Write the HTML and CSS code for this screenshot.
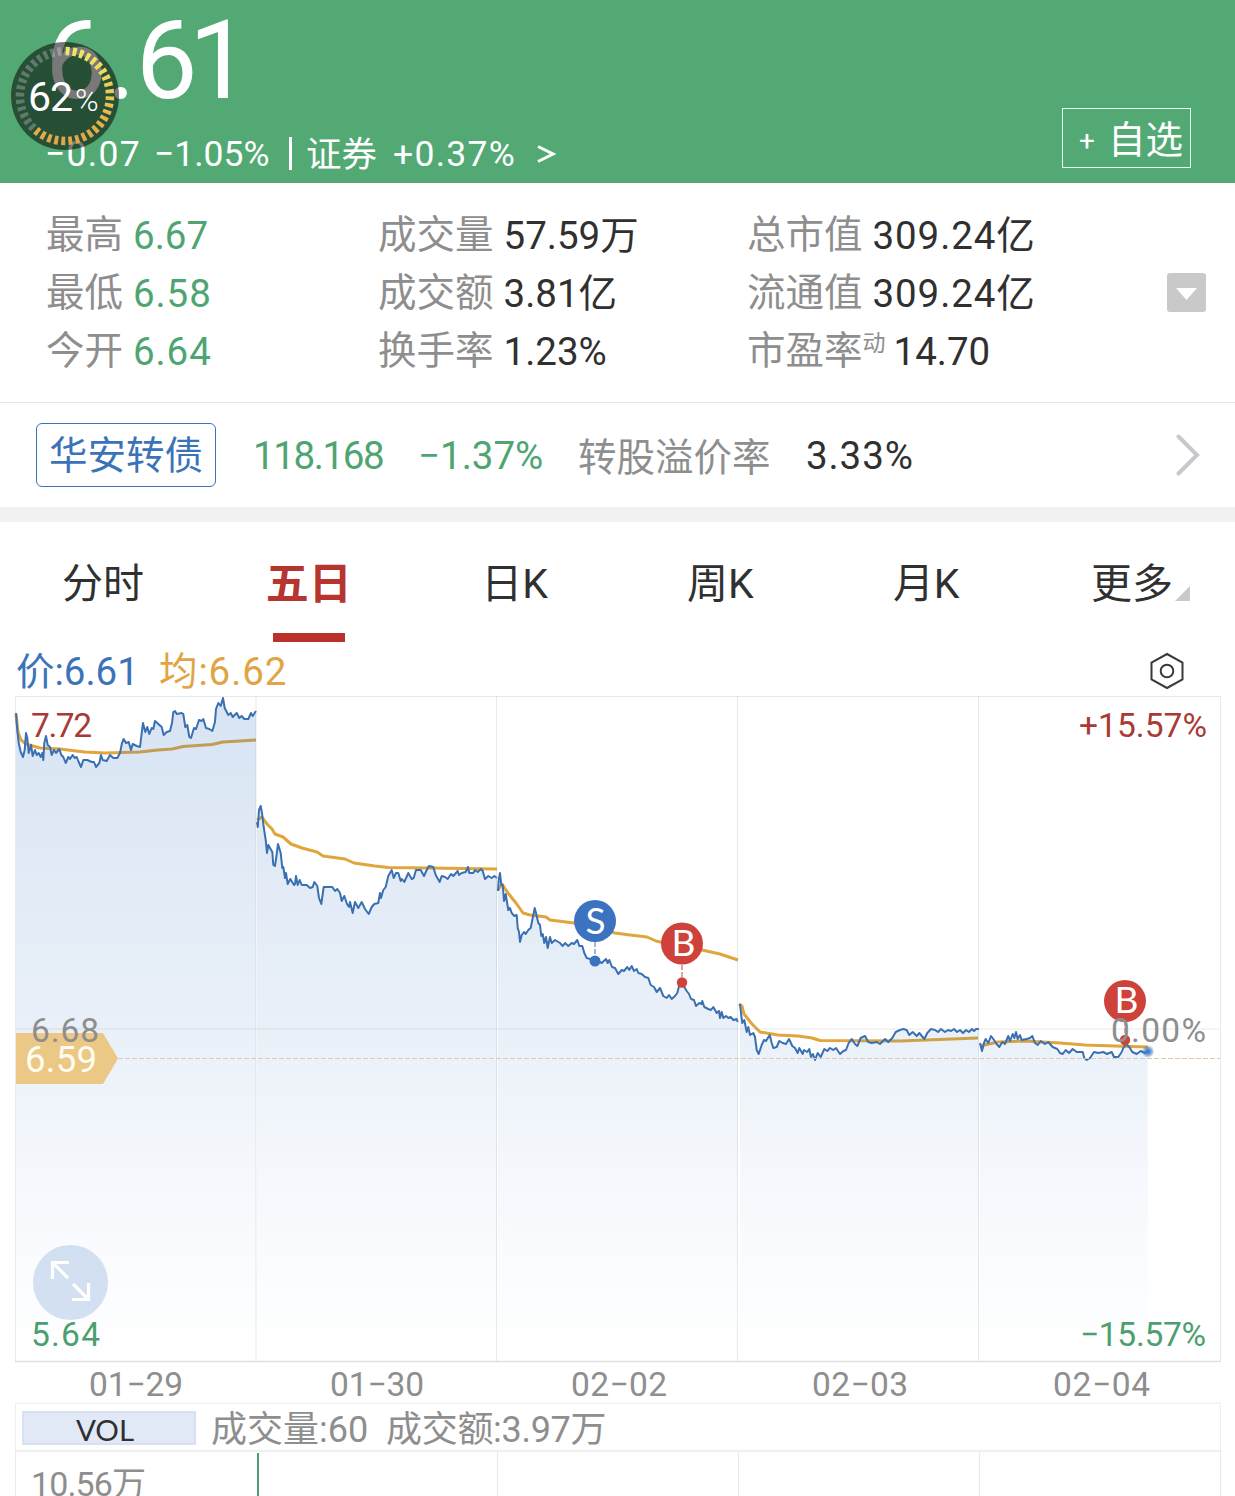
FILE: index.html
```html
<!DOCTYPE html>
<html lang="zh-CN">
  <head>
    <meta charset="UTF-8" />
    <meta name="viewport" content="width=device-width, initial-scale=1.0" />
    <title>华安证券 6.61</title>
    <link rel="stylesheet" href="styles.css">
  </head>
  <body>
    <header class="quote">
      <div class="quote-main">
        <div class="price">6.6<span class="one">1</span></div>
        <div class="change">
          <span class="wide">−0.07</span>
          <span>−1.05%</span>
          <span class="bar"></span>
          <span class="sector">证券</span>
          <span class="wide">+0.37%</span>
          <svg class="more" viewBox="0 0 20 20"><path d="M2 2.5 17 10 2 17.5" /></svg>
        </div>
      </div>
      <button class="btn-add"><span class="plus">+</span>自选</button>

      <!-- Floating battery dial -->
      <svg class="dial" viewBox="0 0 108 108">
        <defs>
          <linearGradient id="gold" x1="0" y1="0" x2="0" y2="1">
            <stop offset="0" stop-color="#f3e765" />
            <stop offset="1" stop-color="#e0a547" />
          </linearGradient>
        </defs>
        <circle class="dial-bg" cx="54" cy="54" r="54" />
        <path class="dial-off" d="M24.6 88.1A45 45 0 0 1 54.8 9" pathLength="156" />
        <path class="dial-on" stroke="url(#gold)" d="M54.8 9A45 45 0 1 1 24.6 88.1" pathLength="246" />
        <text class="dial-num" x="17" y="69" textLength="45">62</text>
        <text class="dial-pct" x="64" y="69" textLength="25">%</text>
      </svg>
    </header>

    <section class="stats">
      <dl class="stats-grid">
        <div><dt>最高</dt><dd class="green">6.67</dd></div>
        <div><dt>成交量</dt><dd>57.59万</dd></div>
        <div><dt>总市值</dt><dd class="wide">309.24亿</dd></div>
        <div><dt>最低</dt><dd class="green wide">6.58</dd></div>
        <div><dt>成交额</dt><dd>3.81亿</dd></div>
        <div><dt>流通值</dt><dd class="wide">309.24亿</dd></div>
        <div><dt>今开</dt><dd class="green wide">6.64</dd></div>
        <div><dt>换手率</dt><dd>1.23%</dd></div>
        <div><dt>市盈率<sup>动</sup></dt><dd class="pe">14.70</dd></div>
      </dl>
      <button class="btn-expand" aria-label="展开">
        <svg viewBox="0 0 39 39"><path d="M9 15h21L19.5 27z" /></svg>
      </button>
    </section>

    <section class="bond">
      <span class="bond-tag">华安转债</span>
      <span class="bond-price green">118.168</span>
      <span class="bond-change green">−1.37%</span>
      <span class="bond-label">转股溢价率</span>
      <span class="bond-rate wide">3.33%</span>
      <svg class="chevron" viewBox="0 0 24 42"><path d="M2.5 2.5 21 21 2.5 39.5" /></svg>
    </section>

    <nav class="tabs">
      <a>分时</a>
      <a class="active">五日</a>
      <a>日K</a>
      <a>周K</a>
      <a>月K</a>
      <a>更多<svg class="corner" viewBox="0 0 15 15"><path d="M15 0v15H0z" /></svg></a>
    </nav>

    <div class="legend">
      <span class="blue">价:6.61</span>
      <span class="gold wide">均:6.62</span>
      <svg class="gear" viewBox="0 0 36 38">
        <path d="M18 2 33.5 10.5v17L18 36 2.5 27.500v-17z" />
        <circle cx="18" cy="19" r="6.300" />
      </svg>
    </div>

    <svg class="chart" viewBox="0 696 1235 708">
      <defs>
        <linearGradient id="fade" gradientUnits="userSpaceOnUse" x1="0" y1="696" x2="0" y2="1361">
          <stop offset="0" stop-color="#3b78c4" stop-opacity=".2" />
          <stop offset=".5" stop-color="#3b78c4" stop-opacity=".11" />
          <stop offset="1" stop-color="#6fa0e0" stop-opacity="0" />
        </linearGradient>
        <radialGradient id="pulse">
          <stop offset="0" stop-color="#3b75c4" />
          <stop offset=".4" stop-color="#3b75c4" stop-opacity=".8" />
          <stop offset="1" stop-color="#3b75c4" stop-opacity=".15" />
        </radialGradient>
      </defs>

      <!-- Average price -->
      <g class="avg">
        <path d="M16 714 18 732 21 740 26 744 40 748 60 749 76 751 85 752 105 753 140 752 158 750 172 749 183 746.500 212 744.500 223 742 240 741 256 740" />
        <path d="M257 820 262 817 267 824 272 829 275 834 283 837 291 844 302 848 317 852 323 856 345 859 354 863 375 866 388 867.500 430 868 497 869" />
        <path d="M498 890 502 884 508 893 516 903 523 913 530 915 546 917 550 920 574 923 595 927 615 933 630 935 647 937 656 941 682 947 702 950 720 954 738 960" />
        <path d="M739 1004 742 1006 744 1014 752 1024 760 1032 778 1035 798 1036 812 1038 820 1040.500 900 1041 978 1038" />
        <path d="M980 1046 998 1042 1025 1041 1060 1043 1085 1045 1115 1046 1148 1047" />
      </g>

      <!-- Shading under the price, filled in by the script below -->
      <g class="area"></g>

      <!-- Price, one path per day -->
      <g class="price-line">
        <path d="M16 713 17.300 730 18.700 743 20.700 752 23 757 24.700 750 26 733 27.300 738 28.700 753 31 745 32.700 756 35 750 36.700 755 38.700 753 40.700 757 42.300 753 43.300 760 44.300 743 46 736 47.700 745 50 747 51.700 755 54 750 56 753 59.300 749 61.300 755 63.300 757 65.700 763 68.300 757 70 759 72.700 755 74.700 758 76.700 757 78.700 762 81 767 83.300 760 87.300 760 91.700 762 94 762 96 767 99.300 763 101 755 102.700 760 106.700 761 110 755 113.300 758 117.300 758 120 753 122 743 123.700 739 126 743 128.700 742 131 750 132.700 744 136.700 746 140 747 141.700 733 143 723 145.300 732 147.300 727 149.300 734 151.700 728 153.300 729 155 721 158.300 724 161.700 727 163.700 735 166.700 732 170 731 172 723 173.300 712 175 711 176.700 714 181.700 713 183.300 714 185.300 727 187.300 725 189.300 737 191 738 194 728 196 729 199 720 201.700 721 203.300 719 206 728 209.300 729 212.300 731 215 722 216 709 218.300 703 220.700 706 223 698 224.700 708 228.300 715 230.700 713 232.700 717 236.700 713 239.300 718 241.700 716 244.300 719 248.300 719 251 713 252.700 716 256 711" />
        <path d="M257 822 257.800 827 259 810 260.700 806 262 813 263.700 827 265.700 840 267 853 268.300 845 272.300 852 273.300 865 275 866 276.300 857 278 844 280.700 853 282.300 868 283.300 867 285 878 286 873 287.700 884 290.300 879 294 885 295 884 296 876 297.700 885 299.700 880 301.700 885 306.700 885 310 888 312.700 887 314.300 882 317.300 886 319 898 321.300 904 323.700 887 326.700 887 332.300 887 335 891 337.300 889 340 893 341.700 901 344.300 896 347 904 349 907 350 902 352.700 913 355 902 358.300 908 361.700 902 365 909 368.700 914 371.700 907 374.300 904 378.300 903 380 893 381 898 383.300 890 385.700 887 388.300 876 391.700 870 393.700 878 396 873 398.300 873 400.700 881 402 879 404.300 882 408.300 873 411.700 879 413.700 878 416 870 420.700 870 424 876 426.700 870 429 866 433.300 867 435.700 875 439.700 882 441.700 876 445 877 447.700 879 451 874 453.300 876 457.700 871 459 875 461.700 873 465.700 872 468 867 469.300 873 473.300 873 475 870 477.700 872 481 869 482.700 871 485 879 488.300 876 491.700 878 494.300 876 497 878" />
        <path d="M498 891 498.700 880 500 873 501.300 885 502.700 885 504 901 505.700 894 508.300 910 510 908 511.700 913 514.300 916 516.700 915 517.700 928 519 932 520 942 521.700 935 524 932 525.700 934 528.300 930 530.700 928 532.700 918 534.700 908 536 913 538.300 923 540 925 541.300 936 542.700 934 544.300 943 546 937 547.700 948 550 937 551.700 943 555 940 560 943 562.700 946 565 943 568.300 946 571.700 943 574 944 577.300 940 579.300 946 582.300 946 584.300 953 586.700 958 590 959 595 961 598 961 601.700 963 606 959 607.700 963 609.300 960 612 967 615 968 618.300 974 621.700 970 624 971 627.300 967 629.300 970 631.700 966 634 971 636.700 969 638.300 973 641.700 974 645 977 648.300 978 650.700 985 654 987 656.700 992 660 988 663.300 996 666.700 998 669 995 671.700 999 675 996 677.300 993 679.300 985 681.700 982 684.300 987 686.700 991 689 994 691 999 694 1000 696 1006 699.300 1003 701.700 1004 702.300 1001 704.300 1007 708.300 1009 711 1010 713.300 1007 716.700 1013 719 1011 720 1018 721.700 1012 723.300 1018 726 1016 728.300 1018 730.700 1017 733.300 1020 736.700 1019 737.700 1022" />
        <path d="M740 1004 741 1013 742.300 1023 744.300 1020 746.700 1032 748.300 1027 750 1035 753.300 1033 755 1037 756.700 1050 758.700 1054 761.700 1045 764 1040 766 1041 769.700 1035 771.700 1043 773.300 1048 776.700 1047 779.300 1041 782.700 1043 786 1044 789 1039 792.300 1046 795 1048 797.700 1053 799.300 1048 802.700 1054 804 1050 807.300 1052 809.300 1049 811 1057 813 1054 815 1060 817.700 1053 820.700 1057 824.300 1049 827.300 1051 830 1048 833.300 1050 836 1048 840 1054 843.300 1051 846 1050 848.700 1043 851.700 1039 855 1044 857.300 1046 860.700 1038 865 1036 868.300 1042 871.700 1043 876.700 1042 880 1044 885 1039 888.300 1042 892.300 1038 895.700 1032 900 1030 903.300 1029 906.700 1030 909.300 1035 912.700 1032 916.700 1036 919.300 1033 924.300 1039 927.300 1033 931 1029 935 1030 938 1032 941 1029 945 1032 948 1030 951 1031 954 1029 957 1032 960 1030 963 1033 966 1030 969 1032 972 1029 974 1031 976 1029 979 1029" />
        <path d="M980 1043 982 1051 984 1043 985.700 1039 988.300 1043 991 1036 993.300 1039 996.700 1044 999.300 1047 1002.300 1042 1005 1044 1008.300 1036 1010 1041 1012.700 1034 1014.300 1038 1016 1032 1017.700 1039 1020 1035 1021.700 1040 1026.700 1039 1030 1038 1032.300 1036 1035 1043 1037.700 1045 1040.700 1041 1045 1044 1048.300 1042 1052.700 1047 1057.300 1049 1060 1053 1062.700 1054 1065.700 1050 1069 1053 1072.700 1049 1076.700 1052 1082.700 1052 1084.300 1058 1086.700 1060 1090 1058 1094 1052 1098.300 1053 1103.300 1052 1107 1054 1111.700 1052 1114 1057 1118.300 1057 1121.700 1052 1123.300 1048 1126 1044 1129.300 1047 1132.300 1052 1136.700 1054 1140.700 1051 1145 1053 1147.700 1051" />
      </g>

      <path class="grid" d="M15.500 696.500H1220.500V1361.500H15.500zM256 696V1361M496.500 696V1361M737.500 696V1361M978.500 696V1361M16 1029H1219" />
      <path class="grid strong" d="M15 1361.500H1221M15 1403.500H1221" />
      <path class="last-dash" d="M118 1058.500H1220" />

      <path class="last-tag" d="M16 1033H103L118 1058.500 103 1084H16z" />
      <text class="last-num" x="25" y="1072" textLength="72">6.59</text>

      <g class="pin sell">
        <path d="M595 942V960" />
        <circle cx="595" cy="961" r="5.500" />
        <circle cx="595" cy="921" r="21" />
        <text x="595.500" y="934">S</text>
      </g>
      <g class="pin buy">
        <path d="M682 965V982" />
        <circle cx="682" cy="982.500" r="5.200" />
        <circle cx="682" cy="943.500" r="21" />
        <text x="683.500" y="956">B</text>
      </g>
      <g class="pin buy">
        <path d="M1125 1021V1040" />
        <circle cx="1125" cy="1040" r="5.200" />
        <circle cx="1125" cy="1001" r="21" />
        <text x="1126.500" y="1013">B</text>
      </g>
      <circle cx="1148" cy="1051.500" r="6" fill="url(#pulse)" />

      <g class="axis">
        <text class="up" x="31" y="737" textLength="61">7.72</text>
        <text class="up" x="1079" y="737" textLength="128">+15.57%</text>
        <text x="31" y="1042" textLength="68">6.68</text>
        <text x="1111" y="1042" textLength="95">0.00%</text>
        <text class="down" x="31" y="1346" textLength="69">5.64</text>
        <text class="down" x="1080" y="1346" textLength="126">−15.57%</text>
        <text x="89" y="1396" textLength="94">01−29</text>
        <text x="330" y="1396" textLength="94">01−30</text>
        <text x="571" y="1396" textLength="96">02−02</text>
        <text x="812" y="1396" textLength="96">02−03</text>
        <text x="1053" y="1396" textLength="97">02−04</text>
      </g>

      <g class="expand">
        <circle cx="70.500" cy="1282.500" r="37.500" />
        <path d="M68 1278 52.500 1262.500M52.500 1279V1262.500H69M73 1284 88.500 1299.500M88.500 1283V1299.500H72" />
      </g>
    </svg>

    <div class="vol-head">
      <span class="vol-btn">VOL</span>
      <span class="vol-count">成交量:60</span>
      <span class="vol-amount">成交额:3.97万</span>
    </div>
    <svg class="vol-chart" viewBox="0 1452 1235 44">
      <path class="grid" d="M15.500 1452V1496M1220.500 1452V1496M497.500 1452V1496M738.500 1452V1496M979.500 1452V1496" />
      <path class="vol-bar" d="M258 1453V1496" />
      <text class="vol-max" x="31" y="1496" textLength="115">10.56万</text>
    </svg>

    <script>
      // Close each day's line down to the bottom of the chart to get its shaded area
      var area = document.querySelector(".area");

      document.querySelectorAll(".price-line path").forEach(function (line) {
        var d = line.getAttribute("d");
        var startX = parseFloat(d.slice(1));
        var shade = document.createElementNS("http://www.w3.org/2000/svg", "path");
        shade.setAttribute("d", d + "V1361H" + startX + "Z");
        area.appendChild(shade);
      });
    </script>
  </body>
</html>
```

FILE: styles.css
```css
:root {
  font-family: Roboto, "Noto Sans CJK SC", sans-serif;
  --green: #4fa572;
  --blue: #3b73b9;
  --gold: #dfa545;
  --red: #b6352f;
  --grey: #8e8e8e;
  --ink: #303030;
}

*,
*::before,
*::after {
  box-sizing: border-box;
}

body {
  margin: 0;
  height: 1496px;
  overflow: hidden;
  background: #fff;
  color: var(--ink);
  font-size: 38.5px;
}

button {
  font: inherit;
  padding: 0;
  margin: 0;
  border: 0;
}

svg {
  display: block;
  fill: none;
}

.green {
  color: var(--green);
}

.blue {
  color: var(--blue);
}

.gold {
  color: var(--gold);
}

.wide {
  letter-spacing: 0.9px;
}

/* Header */
.quote {
  position: relative;
  display: flex;
  justify-content: space-between;
  height: 183px;
  padding: 0 44px 0 45px;
  background: #53a974;
  color: #fff;
}

.price {
  height: 121px;
  line-height: 121px;
  font-size: 110px;
}

.one {
  margin-left: -9px;
}

.change {
  display: grid;
  grid-template-columns: 109px 131px 21px 87px 143px 20px;
  align-items: center;
  height: 64px;
  padding-top: 1px;
  font-size: 35.5px;
  white-space: nowrap;
}

.change .wide {
  letter-spacing: 1.3px;
}

.bar {
  width: 3px;
  height: 33px;
  margin-left: 4px;
  background: #fff;
}

.sector {
  margin-bottom: 5px;
}

.more {
  width: 20px;
  height: 20px;
  stroke: #fff;
  stroke-width: 3;
}

.btn-add {
  display: flex;
  align-items: center;
  justify-content: flex-end;
  width: 129px;
  height: 60px;
  margin-top: 108px;
  padding: 0 7px 3px 0;
  border: 1px solid #e6fff0;
  background: none;
  color: #fff;
  font-size: 37.5px;
}

.plus {
  margin: 8px 13px 0 0;
  font-size: 28px;
}

.dial {
  position: absolute;
  left: 11px;
  top: 42px;
  width: 108px;
  height: 108px;
}

.dial-bg {
  fill: rgba(0, 0, 0, 0.53);
}

.dial-off,
.dial-on {
  stroke-width: 8.5;
  stroke-dasharray: 5.5 4.5;
}

.dial-off {
  stroke: rgba(255, 255, 255, 0.25);
  stroke-dashoffset: -4;
}

.dial-num,
.dial-pct {
  fill: #fff;
  font-size: 41px;
}

.dial-pct {
  font-size: 32px;
  font-weight: 300;
}

/* Key figures */
.stats {
  display: flex;
  align-items: flex-start;
  height: 220px;
  padding: 24px 29px 0 46px;
  border-bottom: 1px solid #e6e6e6;
}

.stats-grid {
  display: grid;
  grid-template-columns: 332px 369px 1fr;
  flex: 1;
  margin: 0;
}

.stats-grid div {
  display: flex;
  height: 58px;
  line-height: 58px;
  white-space: nowrap;
}

.stats-grid dt {
  color: var(--grey);
  line-height: 55px;
  margin-right: 10px;
}

.stats-grid dd {
  margin: 0;
}

.stats-grid .pe {
  margin-left: -2px;
}

sup {
  position: relative;
  top: -13px;
  font-size: 23px;
  line-height: 0;
  vertical-align: baseline;
}

.btn-expand {
  width: 39px;
  height: 39px;
  margin-top: 66px;
  border-radius: 3px;
  background: #c9c9c9;
}

.btn-expand path {
  fill: #fff;
}

/* Convertible bond */
.bond {
  display: flex;
  align-items: center;
  height: 119px;
  padding: 0 35px 0 36px;
  border-bottom: 15px solid #f1f1f1;
  white-space: nowrap;
}

.bond-tag {
  width: 180px;
  height: 64px;
  line-height: 63px;
  border: 1px solid var(--blue);
  border-radius: 6px;
  color: var(--blue);
  text-align: center;
}

.bond-price {
  width: 165px;
  margin-left: 37px;
  letter-spacing: -1.4px;
}

.bond-change {
  width: 160px;
}

.bond-label {
  width: 228px;
  margin-bottom: 2px;
  color: var(--grey);
}

.chevron {
  width: 24px;
  height: 42px;
  margin-left: auto;
  stroke: #c8c8cc;
  stroke-width: 4;
  stroke-linecap: round;
}

/* Period tabs */
.tabs {
  display: grid;
  grid-template: 120px / repeat(6, 1fr);
  line-height: 124px;
  font-size: 41px;
  text-align: center;
}

.tabs a {
  position: relative;
}

.tabs .active {
  color: var(--red);
  font-size: 43px;
  font-weight: bold;
}

.tabs .active::after {
  content: "";
  position: absolute;
  left: 67px;
  bottom: 0;
  width: 72px;
  height: 9px;
  background: #bb322d;
}

.corner {
  position: absolute;
  right: 45px;
  top: 64px;
  width: 15px;
  height: 15px;
  fill: #c9c9c9;
}

/* Chart */
.legend {
  display: flex;
  align-items: center;
  height: 54px;
  padding: 0 50px 0 16px;
}

.legend span {
  width: 143px;
  margin-bottom: 3px;
}

.gear {
  width: 36px;
  height: 38px;
  margin-left: auto;
  margin-top: 4px;
  stroke: #3a3a3a;
  stroke-width: 2;
}

.chart {
  width: 1235px;
  height: 708px;
}

.avg path {
  stroke: #e0a53c;
  stroke-width: 3;
  stroke-linejoin: round;
}

.price-line path {
  stroke: #3a70b2;
  stroke-width: 2;
  stroke-linejoin: round;
}

.area path {
  fill: url(#fade);
}

.grid {
  stroke: #8a9099;
  stroke-opacity: 0.2;
}

.strong {
  stroke-width: 2;
  stroke-opacity: 0.12;
}

.last-dash {
  stroke: #e2c9ab;
  stroke-dasharray: 5 2;
}

.last-tag {
  fill: #ecc886;
}

.last-num {
  fill: #fffdf0;
  font-size: 36.5px;
}

.axis text {
  fill: var(--grey);
  font-size: 33.5px;
}

.axis .up {
  fill: #a83a35;
}

.axis .down {
  fill: #4b9f6e;
}

.pin text {
  fill: #fff;
  font-family: Lato, sans-serif;
  font-size: 37px;
  text-anchor: middle;
}

.pin path {
  stroke-dasharray: 5 2;
  stroke-width: 1.5;
}

.sell circle {
  fill: #3b73c1;
}

.sell path {
  stroke: #7f9dc8;
}

.buy circle {
  fill: #cf423b;
}

.buy path {
  stroke: #c98a8a;
}

.expand circle {
  fill: #a9c3e6;
  fill-opacity: 0.5;
}

.expand path {
  stroke: #fff;
  stroke-width: 3.2;
}

/* Volume */
.vol-head {
  display: flex;
  align-items: center;
  height: 48px;
  margin: 0 14px 0 15px;
  padding: 0 0 2px 6px;
  border: solid #efefef;
  border-width: 0 1px 2px;
  color: var(--grey);
  font-size: 36px;
  white-space: nowrap;
}

.vol-btn {
  width: 174px;
  height: 34px;
  line-height: 33px;
  margin: 3px 15px 0 0;
  padding-right: 8px;
  border: 2px solid #d6e1f1;
  background: #e2e9f6;
  color: var(--ink);
  font-family: Lato, sans-serif;
  font-size: 29.5px;
  text-align: center;
}

.vol-count {
  width: 175px;
}

.vol-amount {
  letter-spacing: -0.3px;
}

.vol-chart {
  width: 1235px;
  height: 44px;
}

.vol-bar {
  stroke: #4f9c78;
  stroke-width: 2;
}

.vol-max {
  fill: var(--grey);
  font-size: 34px;
}
```
